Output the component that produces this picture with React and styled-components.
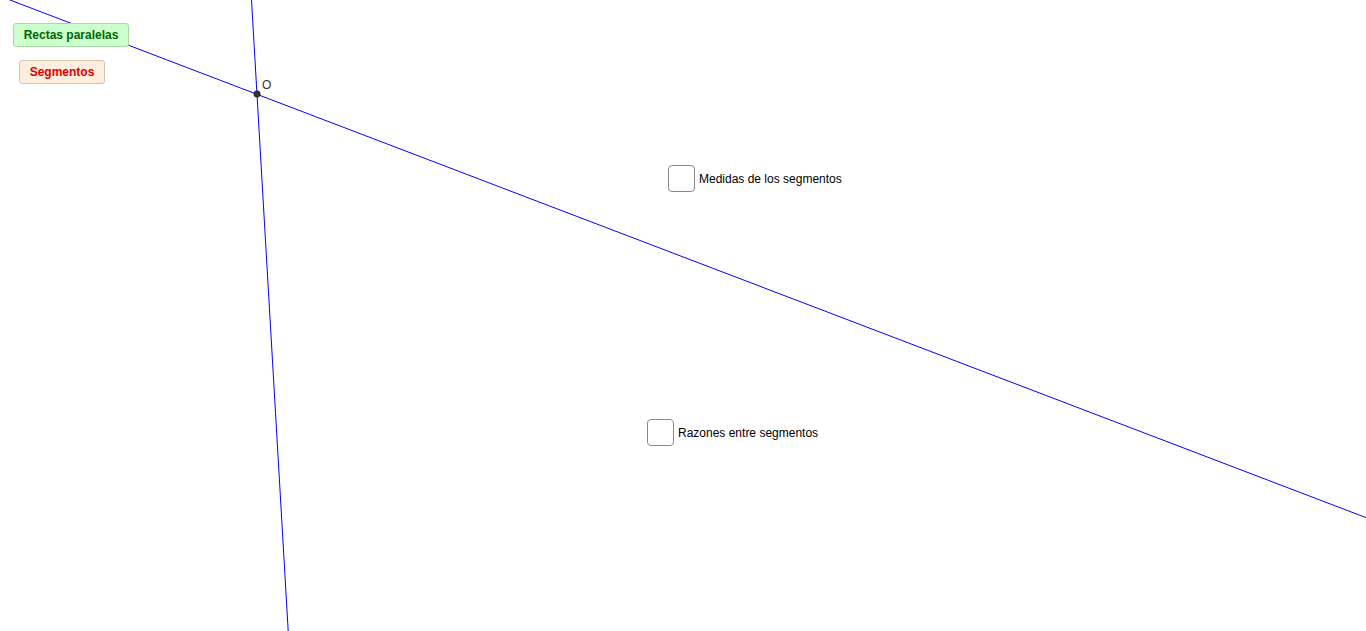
import React from 'react';
import styled, { createGlobalStyle } from 'styled-components';

const GlobalStyle = createGlobalStyle`
    html, body {
        margin: 0;
        padding: 0;
        background: #ffffff;
        font-family: "Liberation Sans", Arial, sans-serif;
        overflow: hidden;
    }
`

const Canvas = styled.div`
    position: relative;
    width: 1366px;
    height: 631px;
    background: #ffffff;
    overflow: hidden;
`

const Drawing = styled.svg`
    position: absolute;
    left: 0;
    top: 0;
`

const ActionButton = styled.button`
    position: absolute;
    left: ${props => props.x}px;
    top: ${props => props.y}px;
    width: ${props => props.w}px;
    height: 24px;
    box-sizing: border-box;
    padding: 0;
    display: flex;
    justify-content: center;
    align-items: center;
    background: ${props => props.bg};
    border: 1px solid ${props => props.border};
    border-radius: 3px;
    color: ${props => props.color};
    font-family: "Liberation Sans", Arial, sans-serif;
    font-weight: bold;
    font-size: 12px;
    cursor: pointer;
`

const CheckRow = styled.label`
    position: absolute;
    left: ${props => props.x}px;
    top: ${props => props.y}px;
    display: flex;
    align-items: center;
    gap: 4px;
    font-size: 12px;
    color: #000000;
    cursor: pointer;
`

const Box = styled.span`
    width: 27px;
    height: 27px;
    box-sizing: border-box;
    border: 1px solid #8a8a8a;
    border-radius: 4px;
    background: #ffffff;
`

const PointLabel = styled.span`
    position: absolute;
    left: 262px;
    top: 78px;
    font-size: 12px;
    color: #333333;
`

function App() {
    return (
        <Canvas>
            <GlobalStyle />
            <Drawing width="1366" height="631" viewBox="0 0 1366 631">
                <line x1="0" y1="-3.8" x2="1366" y2="517.6" stroke="#0000ff" strokeWidth="1" />
                <line x1="251.5" y1="0" x2="288.2" y2="631" stroke="#0000ff" strokeWidth="1" />
                <circle cx="257" cy="94" r="3.2" fill="#333333" stroke="#222222" strokeWidth="0.8" />
            </Drawing>
            <PointLabel>O</PointLabel>
            <ActionButton x={13} y={23} w={116} bg="#ccffcc" border="#a8d8a8" color="#006600">
                Rectas paralelas
            </ActionButton>
            <ActionButton x={19} y={60} w={86} bg="#ffeedd" border="#d0c4b4" color="#dd0000">
                Segmentos
            </ActionButton>
            <CheckRow x={668} y={165}>
                <Box />
                Medidas de los segmentos
            </CheckRow>
            <CheckRow x={647} y={419}>
                <Box />
                Razones entre segmentos
            </CheckRow>
        </Canvas>
    )
}

export default App
